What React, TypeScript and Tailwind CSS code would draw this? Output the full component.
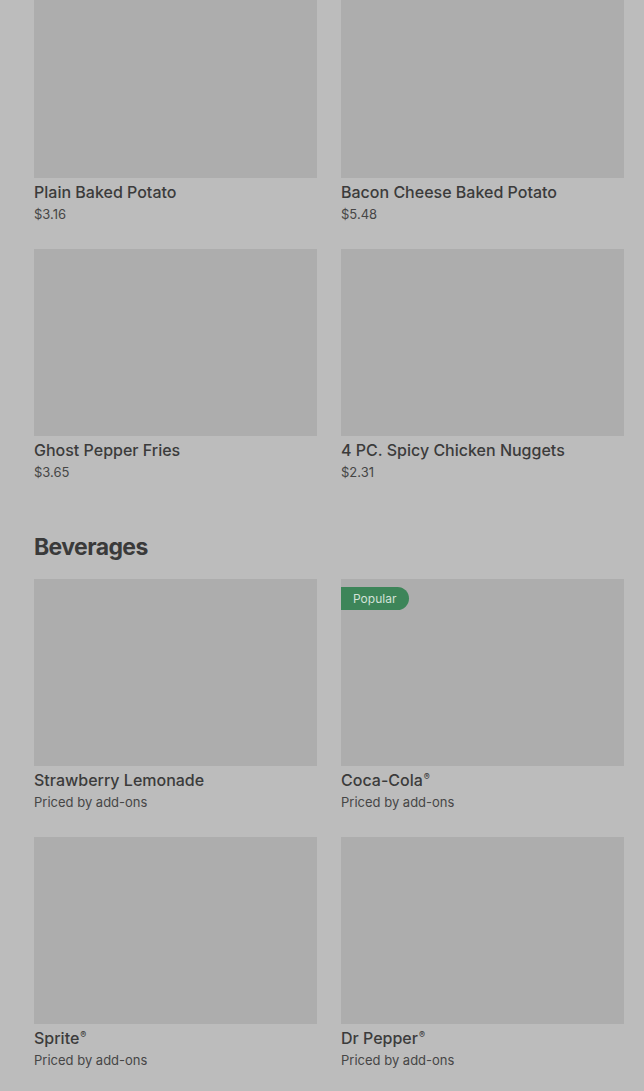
import React from "react";

interface Item {
  name: string;
  reg?: boolean;
  price: string;
  badge?: string;
}

const sides: Item[] = [
  { name: "Plain Baked Potato", price: "$3.16" },
  { name: "Bacon Cheese Baked Potato", price: "$5.48" },
  { name: "Ghost Pepper Fries", price: "$3.65" },
  { name: "4 PC. Spicy Chicken Nuggets", price: "$2.31" },
];

const beverages: Item[] = [
  { name: "Strawberry Lemonade", price: "Priced by add-ons" },
  { name: "Coca-Cola", reg: true, price: "Priced by add-ons", badge: "Popular" },
  { name: "Sprite", reg: true, price: "Priced by add-ons" },
  { name: "Dr Pepper", reg: true, price: "Priced by add-ons" },
];

function ItemCard({ item }: { item: Item }) {
  return (
    <div className="flex flex-col">
      <div className="relative h-[187px] w-full bg-[#adadad]">
        {item.badge && (
          <span className="absolute left-0 top-[8px] h-[23px] pl-[12px] pr-[13px] flex items-center rounded-r-full bg-[#3d8559] text-[12px] text-[#d3e2d8]">
            {item.badge}
          </span>
        )}
      </div>
      <div className="mt-[3px] text-[16px] leading-[22px] font-medium text-[#3b3b3b]">
        {item.name}
        {item.reg && <sup className="text-[9px] ml-[1px] -top-[6px]">®</sup>}
      </div>
      <div className="mt-[1px] text-[13px] leading-[21px] text-[#464646]">{item.price}</div>
    </div>
  );
}

export default function App() {
  return (
    <div
      className="min-h-screen bg-[#bcbcbc] overflow-hidden"
      style={{ fontFamily: "Inter, 'Liberation Sans', sans-serif" }}
    >
      <div className="pl-[34px] pr-[20px] -mt-[9px]">
        <div className="grid grid-cols-2 gap-x-[24px] gap-y-[24px]">
          {sides.map((item) => (
            <ItemCard key={item.name} item={item} />
          ))}
        </div>

        <h2 className="mt-[48px] mb-[16px] text-[23px] leading-[32px] font-bold tracking-[-0.6px] text-[#3a3a3a]">
          Beverages
        </h2>
        <div className="grid grid-cols-2 gap-x-[24px] gap-y-[24px]">
          {beverages.map((item) => (
            <ItemCard key={item.name} item={item} />
          ))}
        </div>
      </div>
    </div>
  );
}
